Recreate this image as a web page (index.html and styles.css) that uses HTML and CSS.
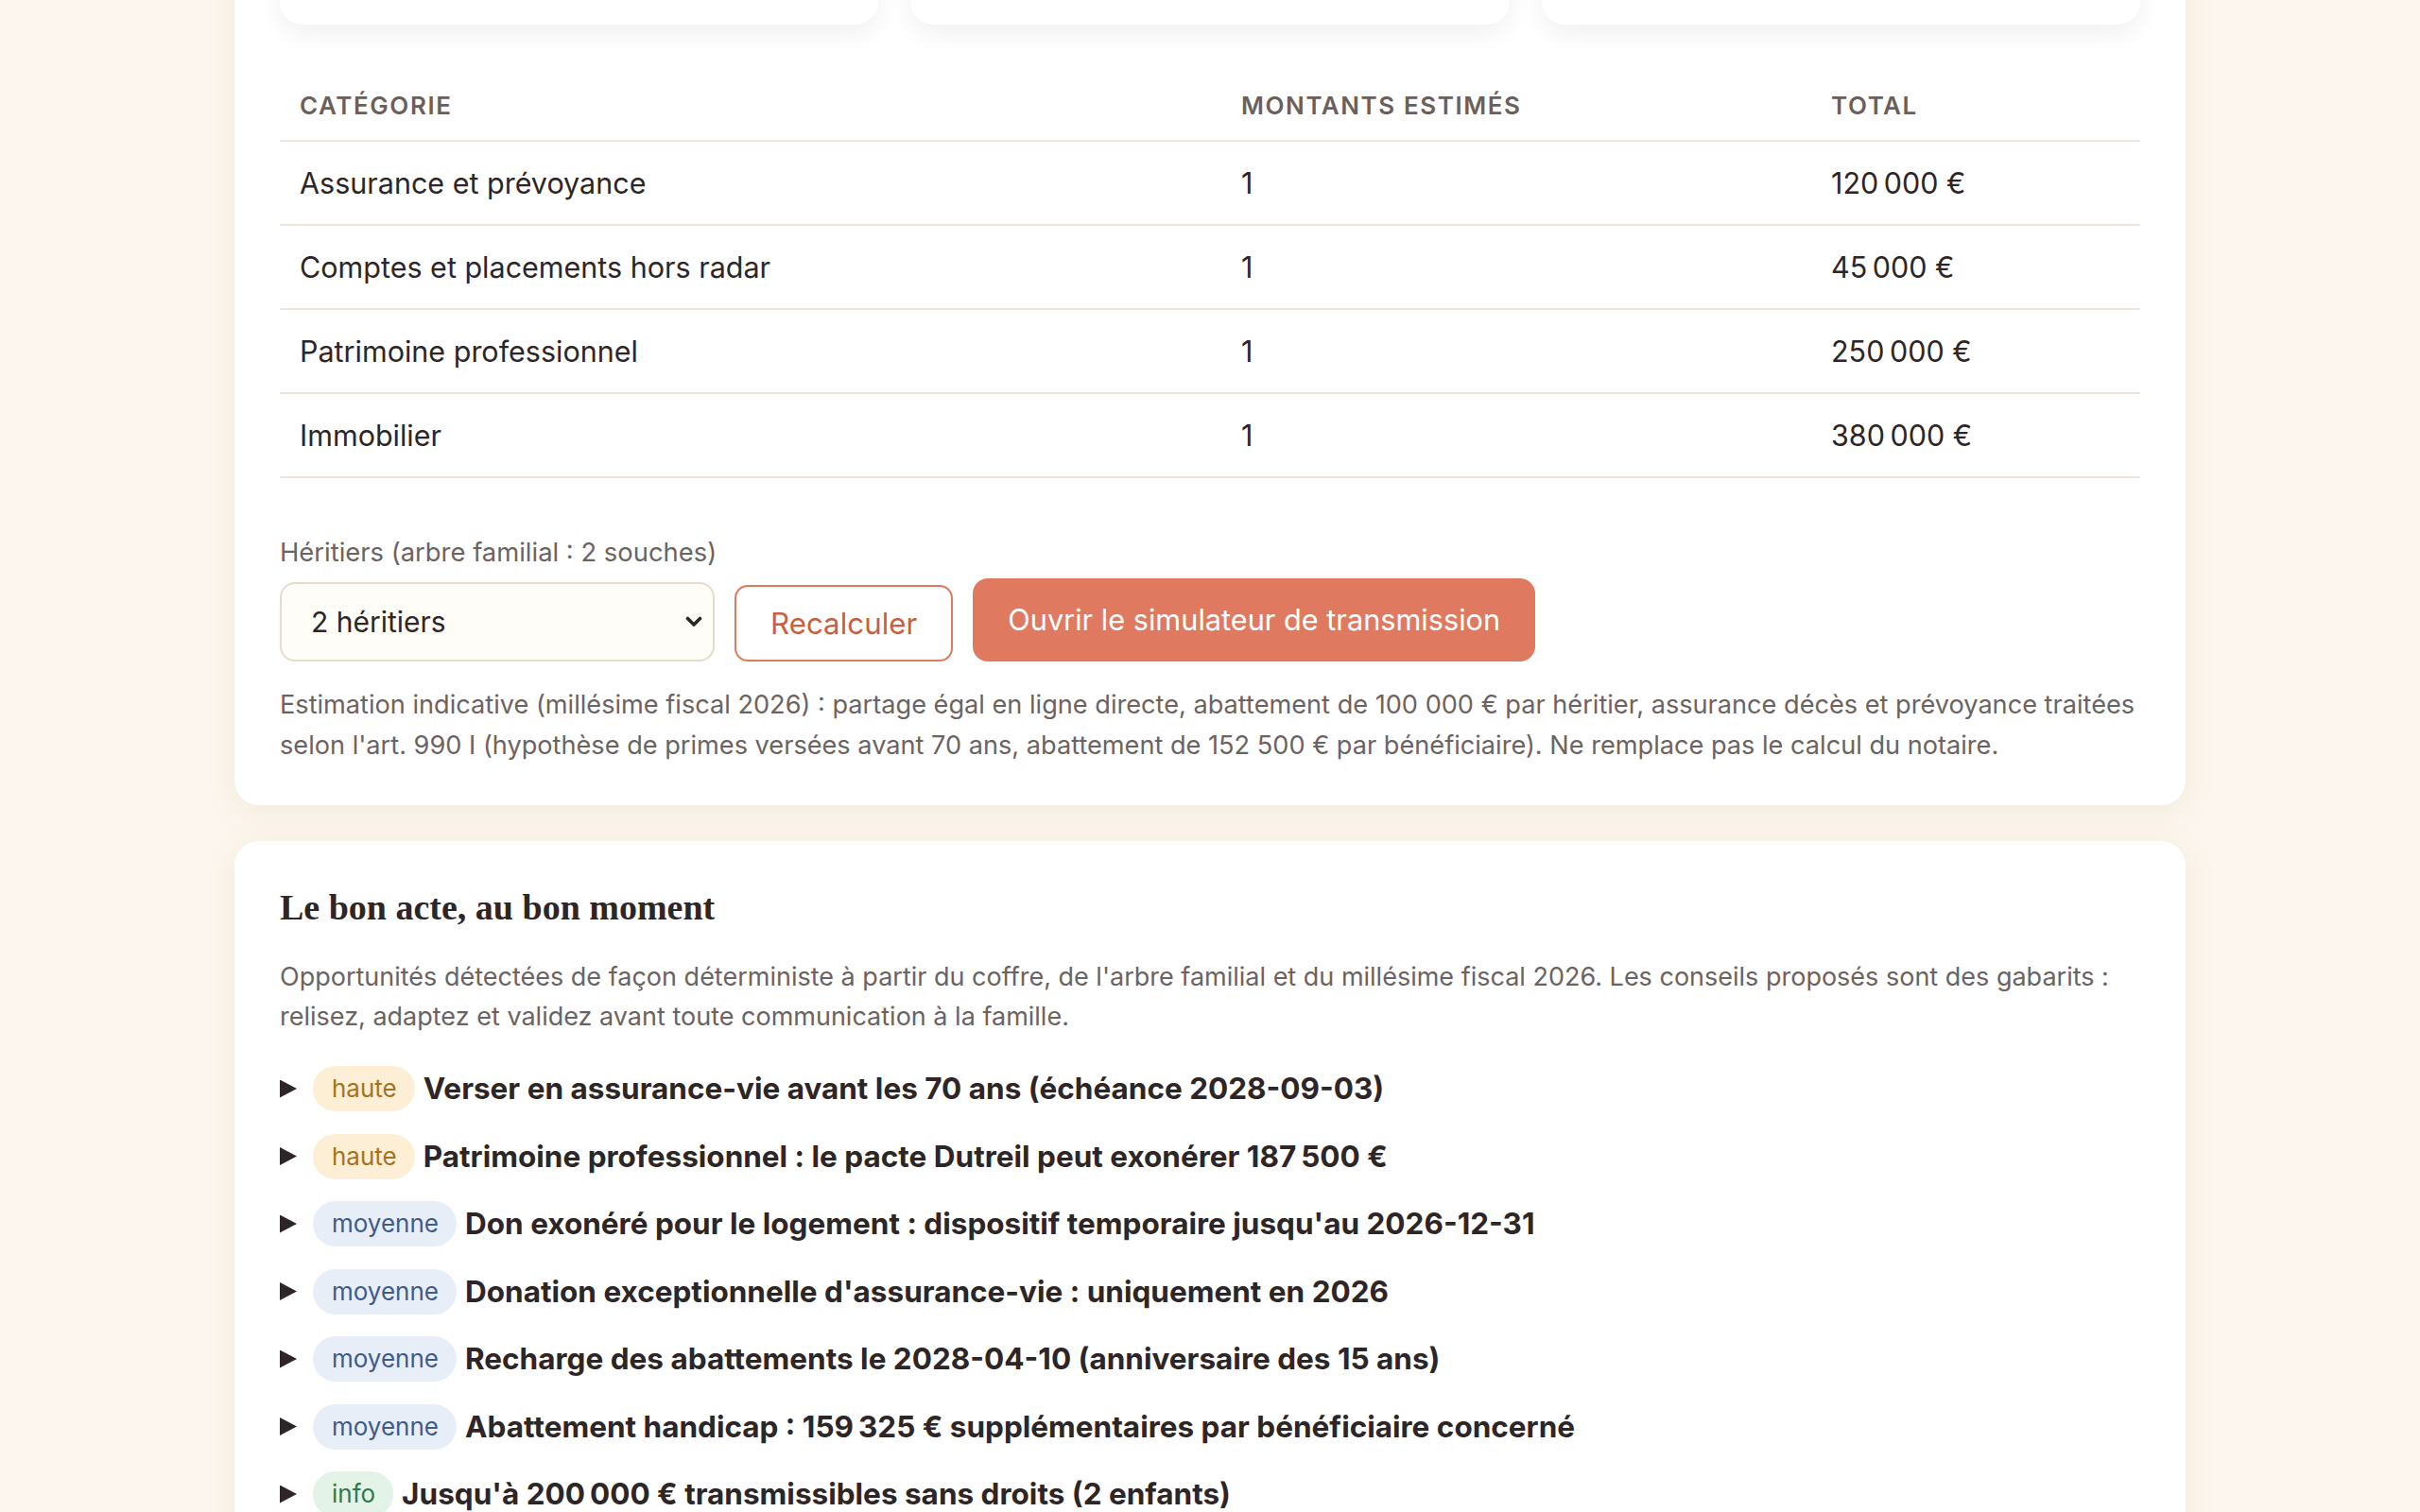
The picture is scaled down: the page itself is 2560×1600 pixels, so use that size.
FILE: index.html
```html
<!DOCTYPE html>
<html lang="fr">
<head>
    <meta charset="UTF-8">
    <meta name="viewport" content="width=device-width, initial-scale=1.0">
    <title>Coffre familial — Transmission</title>
    <link rel="stylesheet" href="styles.css">
</head>
<body>
    <main class="page">
        <!-- Estimation de la succession -->
        <section class="card">
            <div class="stats">
                <div class="stat"></div>
                <div class="stat"></div>
                <div class="stat"></div>
            </div>

            <table class="estimates">
                <colgroup>
                    <col class="col-cat">
                    <col class="col-count">
                    <col class="col-total">
                </colgroup>
                <thead>
                    <tr>
                        <th>Catégorie</th>
                        <th>Montants estimés</th>
                        <th>Total</th>
                    </tr>
                </thead>
                <tbody>
                    <tr><td>Assurance et prévoyance</td><td>1</td><td>120&#8239;000&nbsp;€</td></tr>
                    <tr><td>Comptes et placements hors radar</td><td>1</td><td>45&#8239;000&nbsp;€</td></tr>
                    <tr><td>Patrimoine professionnel</td><td>1</td><td>250&#8239;000&nbsp;€</td></tr>
                    <tr><td>Immobilier</td><td>1</td><td>380&#8239;000&nbsp;€</td></tr>
                </tbody>
            </table>

            <div class="heirs">
                <label class="field-label" for="heirCount">Héritiers (arbre familial : 2 souches)</label>
                <div class="heirs-row">
                    <div class="select-wrap">
                        <select id="heirCount" class="select">
                            <option>1 héritier</option>
                            <option selected>2 héritiers</option>
                            <option>3 héritiers</option>
                            <option>4 héritiers</option>
                        </select>
                        <svg class="select-arrow" width="18" height="12" viewBox="0 0 18 12" aria-hidden="true">
                            <polyline points="2.5,2.5 9,9 15.5,2.5" fill="none" stroke="currentColor" stroke-width="3.6" stroke-linecap="round" stroke-linejoin="round"/>
                        </svg>
                    </div>
                    <button type="button" class="btn btn-outline">Recalculer</button>
                    <button type="button" class="btn btn-primary">Ouvrir le simulateur de transmission</button>
                </div>
            </div>

            <p class="note">Estimation indicative (millésime fiscal 2026) : partage égal en ligne directe, abattement de 100 000 € par héritier, assurance décès et prévoyance traitées selon l'art. 990 I (hypothèse de primes versées avant 70 ans, abattement de 152 500 € par bénéficiaire). Ne remplace pas le calcul du notaire.</p>
        </section>

        <!-- Opportunités -->
        <section class="card">
            <h2 class="card-title">Le bon acte, au bon moment</h2>
            <p class="lead">Opportunités détectées de façon déterministe à partir du coffre, de l'arbre familial et du millésime fiscal 2026. Les conseils proposés sont des gabarits : relisez, adaptez et validez avant toute communication à la famille.</p>

            <div class="advice-list">
                <details class="advice">
                    <summary><span class="tag tag-high">haute</span>Verser en assurance-vie avant les 70 ans (échéance 2028-09-03)</summary>
                </details>
                <details class="advice">
                    <summary><span class="tag tag-high">haute</span>Patrimoine professionnel : le pacte Dutreil peut exonérer 187&#8239;500&nbsp;€</summary>
                </details>
                <details class="advice">
                    <summary><span class="tag tag-mid">moyenne</span>Don exonéré pour le logement : dispositif temporaire jusqu'au 2026-12-31</summary>
                </details>
                <details class="advice">
                    <summary><span class="tag tag-mid">moyenne</span>Donation exceptionnelle d'assurance-vie : uniquement en 2026</summary>
                </details>
                <details class="advice">
                    <summary><span class="tag tag-mid">moyenne</span>Recharge des abattements le 2028-04-10 (anniversaire des 15 ans)</summary>
                </details>
                <details class="advice">
                    <summary><span class="tag tag-mid">moyenne</span>Abattement handicap : 159&#8239;325&nbsp;€ supplémentaires par bénéficiaire concerné</summary>
                </details>
                <details class="advice">
                    <summary><span class="tag tag-info">info</span>Jusqu'à 200&#8239;000&nbsp;€ transmissibles sans droits (2 enfants)</summary>
                </details>
            </div>
        </section>
    </main>
</body>
</html>
```

FILE: styles.css
```css
:root {
    --color-bg: #fcf6ee;          /* warm paper */
    --color-card: #ffffff;
    --color-ink: #2e2626;          /* main text */
    --color-muted: #6c6361;        /* secondary text */
    --color-head: #6b5f5c;         /* table headers */
    --color-line: #efe6db;         /* table rules */
    --color-field: #fffdf8;        /* select background */
    --color-field-border: #e6dccb;
    --color-accent: #df7a60;       /* terracotta */
    --color-accent-ink: #c8603f;
    --font-sans: 'Inter', 'Liberation Sans', sans-serif;
    --font-serif: 'Liberation Serif', 'DejaVu Serif', serif;
    --radius-card: 26px;
}

* {
    box-sizing: border-box;
    margin: 0;
    padding: 0;
}

body {
    background: var(--color-bg);
    color: var(--color-ink);
    font-family: var(--font-sans);
    overflow: hidden;
}

.page {
    width: 2064px;
    margin: -172px auto 0;
    display: flex;
    flex-direction: column;
    gap: 38px;
}

/* Cards */
.card {
    background: var(--color-card);
    border-radius: var(--radius-card);
    padding: 48px 48px 42px;
    box-shadow: 0 6px 34px rgba(150, 125, 70, 0.1);
}

.stats {
    display: grid;
    grid-template-columns: repeat(3, 1fr);
    gap: 34px;
}

.stat {
    height: 150px;
    background: var(--color-card);
    border-radius: 24px;
    box-shadow: 0 10px 26px rgba(0, 0, 0, 0.06);
}

/* Estimates table */
.estimates {
    width: 100%;
    margin-top: 49px;
    border-collapse: collapse;
    table-layout: fixed;
}

.col-cat { width: 996px; }
.col-count { width: 624px; }

.estimates th {
    padding: 18px 21px 17px;
    font-size: 26px;
    line-height: 38px;
    font-weight: 600;
    color: var(--color-head);
    text-transform: uppercase;
    letter-spacing: 0.06em;
    text-align: left;
    border-bottom: 2px solid var(--color-line);
}

.estimates td {
    padding: 22px 21px;
    font-size: 30.5px;
    line-height: 43px;
    border-bottom: 2px solid var(--color-line);
}

/* Heirs controls */
.heirs {
    margin-top: 58px;
}

.field-label {
    display: block;
    font-size: 27.4px;
    line-height: 40px;
    color: var(--color-muted);
    margin-bottom: 8px;
}

.heirs-row {
    display: flex;
    align-items: flex-end;
    gap: 21px;
}

.select-wrap {
    position: relative;
    display: flex;
}

.select {
    width: 460px;
    height: 84px;
    padding: 0 56px 0 31px;
    appearance: none;
    font-family: var(--font-sans);
    font-size: 30px;
    color: var(--color-ink);
    background: var(--color-field);
    border: 2px solid var(--color-field-border);
    border-radius: 16px;
}

.select-arrow {
    position: absolute;
    right: 13px;
    top: 36px;
    color: var(--color-ink);
    pointer-events: none;
}

.btn {
    font-family: var(--font-sans);
    line-height: 36px;
    border-radius: 16px;
    cursor: pointer;
}

.btn-outline {
    padding: 21px 36px 20px;
    font-size: 31.3px;
    background: var(--color-card);
    color: var(--color-accent-ink);
    border: 2px solid var(--color-accent);
    border-radius: 14px;
}

.btn-primary {
    padding: 26px 37px;
    font-size: 30.7px;
    background: var(--color-accent);
    color: #ffffff;
    border: none;
}

.note {
    margin-top: 24px;
    font-size: 27.15px;
    line-height: 43px;
    color: var(--color-muted);
}

/* Opportunities */
.card-title {
    font-family: var(--font-serif);
    font-size: 38px;
    line-height: 44px;
    font-weight: 700;
    color: var(--color-ink);
}

.lead {
    margin-top: 31px;
    font-size: 27px;
    line-height: 42px;
    color: var(--color-muted);
}

.advice-list {
    margin-top: 31px;
    display: flex;
    flex-direction: column;
    gap: 23.5px;
}

.advice summary {
    display: flex;
    align-items: center;
    list-style: none;
    font-size: 31.5px;
    line-height: 48px;
    font-weight: 700;
    color: var(--color-ink);
    cursor: pointer;
}

.advice summary::-webkit-details-marker {
    display: none;
}

/* closed disclosure arrow */
.advice summary::before {
    content: "";
    flex: none;
    width: 18px;
    height: 19px;
    margin-right: 17px;
    background: var(--color-ink);
    clip-path: polygon(0 0, 100% 50%, 0 100%);
}

.advice[open] summary::before {
    clip-path: polygon(0 0, 100% 0, 50% 100%);
}

.tag {
    flex: none;
    margin-right: 9px;
    padding: 0 19px 0 20px;
    border-radius: 999px;
    font-size: 26px;
    line-height: 48px;
    font-weight: 400;
}

.tag-high {
    background: #fcefd6;
    color: #a8721c;
}

.tag-mid {
    background: #e8eef8;
    color: #3e5b8c;
}

.tag-info {
    background: #e3f3e8;
    color: #2e7a4c;
}
```
